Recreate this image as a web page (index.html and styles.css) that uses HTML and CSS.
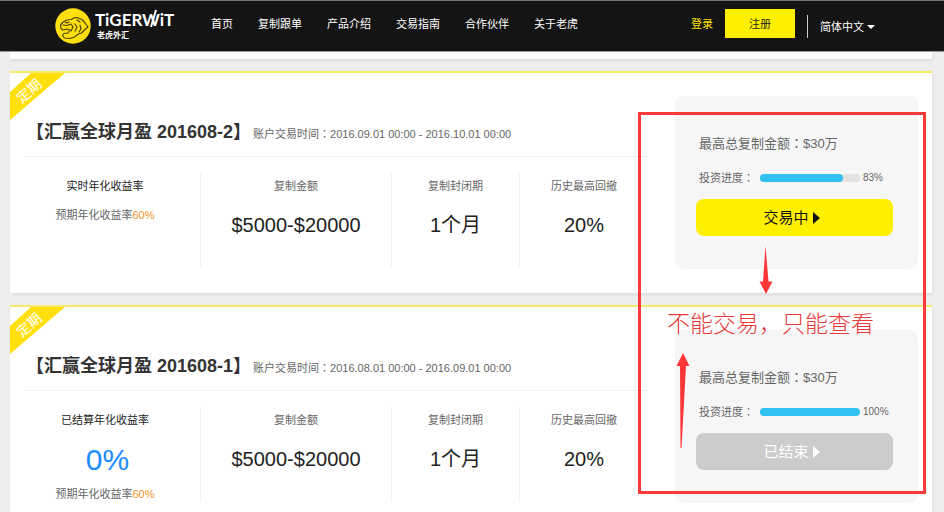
FILE: index.html
```html
<!DOCTYPE html>
<html lang="zh-CN">
<head>
<meta charset="utf-8">
<title>老虎外汇</title>
<link rel="stylesheet" href="styles.css">
</head>
<body>
<header class="topbar">
  <a class="logo" href="#">
    <svg class="logo-mark" viewBox="0 0 36 36" aria-hidden="true">
      <circle cx="18" cy="18" r="17.700" fill="#ffdf0f"/>
      <g fill="none" stroke="#4a430f" stroke-width="1.200" stroke-linecap="round" stroke-linejoin="round">
        <path d="M33 19l-3-4-3-3.500-5-2-3 .5-3 1.500-4 .5-4 2-2.500 3 .5 3.500 2 1.500 4-1 3 1-2 3-4 .5-1.500 2 2 2.500 5 .5 5-1.500 4-3 3-1 3-3z"/>
        <path d="M8 17l4 .5 4-1.500 2 3-2 4M20 16l2 3-2 4M25 17l1 4-2 3M22 12l3 2M10 14l2 1 2-1"/>
      </g>
    </svg>
    <span class="logo-text">
      <span class="logo-name">TiGERWiT
        <svg class="logo-slash" viewBox="0 0 8 20" aria-hidden="true"><path d="M1 18L6 1" stroke="#fff" stroke-width="2"/></svg>
      </span>
      <span class="logo-sub">老虎外汇</span>
    </span>
  </a>
  <nav class="nav">
    <a href="#">首页</a>
    <a href="#">复制跟单</a>
    <a href="#">产品介绍</a>
    <a href="#">交易指南</a>
    <a href="#">合作伙伴</a>
    <a href="#">关于老虎</a>
  </nav>
  <div class="account">
    <a class="login" href="#">登录</a>
    <button class="register" type="button">注册</button>
    <button class="language" type="button">简体中文<span class="caret"></span></button>
  </div>
</header>

<main class="page">
  <section class="card card-previous"></section>

  <section class="card">
    <div class="ribbon"><span>定期</span></div>
    <div class="details">
      <div class="heading">
        <h2>【汇赢全球月盈 201608-2】</h2>
        <p>账户交易时间<span class="colon" lang="zh-TW">：</span>2016.09.01 00:00 - 2016.10.01 00:00</p>
      </div>
      <div class="stats">
        <div class="stat stat-rate">
          <h3>实时年化收益率</h3>
          <p class="expected">预期年化收益率<em>60%</em></p>
        </div>
        <div class="stat"><h3>复制金额</h3><p class="value">$5000-$20000</p></div>
        <div class="stat"><h3>复制封闭期</h3><p class="value">1个月</p></div>
        <div class="stat"><h3>历史最高回撤</h3><p class="value">20%</p></div>
      </div>
    </div>
    <aside class="panel">
      <p class="limit">最高总复制金额<span class="colon" lang="zh-TW">：</span>$30万</p>
      <div class="progress">
        <span>投资进度<span class="colon" lang="zh-TW">：</span></span>
        <div class="track"><div class="fill" style="width: 83%"></div></div>
        <span class="percent">83%</span>
      </div>
      <button class="action" type="button">交易中<span class="play"></span></button>
    </aside>
  </section>

  <section class="card">
    <div class="ribbon"><span>定期</span></div>
    <div class="details">
      <div class="heading">
        <h2>【汇赢全球月盈 201608-1】</h2>
        <p>账户交易时间<span class="colon" lang="zh-TW">：</span>2016.08.01 00:00 - 2016.09.01 00:00</p>
      </div>
      <div class="stats">
        <div class="stat stat-rate">
          <h3>已结算年化收益率</h3>
          <p class="rate">0%</p>
          <p class="expected">预期年化收益率<em>60%</em></p>
        </div>
        <div class="stat"><h3>复制金额</h3><p class="value">$5000-$20000</p></div>
        <div class="stat"><h3>复制封闭期</h3><p class="value">1个月</p></div>
        <div class="stat"><h3>历史最高回撤</h3><p class="value">20%</p></div>
      </div>
    </div>
    <aside class="panel">
      <p class="limit">最高总复制金额<span class="colon" lang="zh-TW">：</span>$30万</p>
      <div class="progress">
        <span>投资进度<span class="colon" lang="zh-TW">：</span></span>
        <div class="track"><div class="fill" style="width: 100%"></div></div>
        <span class="percent">100%</span>
      </div>
      <button class="action action-ended" type="button">已结束<span class="play"></span></button>
    </aside>
  </section>

  <div class="callout">
    <svg class="arrow arrow-down" viewBox="0 0 14 48" aria-hidden="true"><path d="M6.5 0L9.5 35.5H13.5L7 48L.5 35.5H4z"/></svg>
    <p>不能交易，只能查看</p>
    <svg class="arrow arrow-up" viewBox="0 0 14 96" aria-hidden="true"><path d="M7 0L13.500 13H10L5.500 95L4.500 95L4 13H.5z"/></svg>
  </div>
</main>
</body>
</html>
```

FILE: styles.css
```css
* {
  box-sizing: border-box;
}

body,
h2,
h3,
p {
  margin: 0;
}

body {
  background: #efeeef;
  color: #666;
  font: 11px/16px "Liberation Sans", "Noto Sans CJK SC", sans-serif;
}

a {
  color: inherit;
  text-decoration: none;
}

button {
  border: 0;
  padding: 0;
  font: inherit;
}

/* Top bar */
.topbar {
  display: flex;
  align-items: flex-start;
  height: 52px;
  padding-left: 55px;
  padding-right: 69px;
  border-top: 1px solid #777;
  border-bottom: 1px solid #999;
  background: #141414;
  color: #fff;
}

.logo {
  display: flex;
  gap: 4px;
  width: 156px;
  padding-top: 7px;
}

.logo-mark {
  width: 36px;
  height: 36px;
}

.logo-text {
  display: flex;
  flex-direction: column;
}

.logo-name {
  position: relative;
  font: 700 17px/24px Lato, sans-serif;
}

.logo-slash {
  position: absolute;
  left: 55px;
  top: 1px;
  width: 8px;
  height: 20px;
}

.logo-sub {
  padding-left: 2px;
  font-size: 8px;
  font-weight: 700;
  line-height: 8px;
}

.nav {
  display: flex;
  gap: 25px;
  padding-top: 15px;
}

.account {
  display: flex;
  margin-left: auto;
  padding-top: 8px;
}

.login {
  padding: 7px 12px 0 0;
  color: #ffe500;
}

.register {
  width: 70px;
  height: 29px;
  background: #fff000;
  color: #222;
}

.language {
  display: flex;
  align-items: center;
  gap: 3px;
  height: 23px;
  margin: 6px 0 0 12px;
  padding-left: 12px;
  border-left: 1px solid #ccc;
  background: none;
  color: #fff;
}

.caret {
  border: 4px solid transparent;
  border-top-color: #fff;
  border-bottom: 0;
}

/* Product cards */
.page {
  position: relative;
  display: flex;
  flex-direction: column;
  gap: 12px;
  padding: 0 12px 12px 10px;
}

.card {
  position: relative;
  display: grid;
  grid-template-columns: minmax(0, 1fr) 243px;
  gap: 27px;
  padding: 23px 14px 24px 16px;
  border-top: 2px solid #f7e96b;
  background: #fff;
  box-shadow: 1px 2px 3px #ddd;
}

.card-previous {
  display: block;
  height: 7px;
  padding: 0;
  border: 0;
}

.ribbon {
  position: absolute;
  top: 0;
  left: 0;
  display: grid;
  place-items: center;
  width: 55px;
  height: 47px;
  padding: 0 17px 11px 0;
  background: #ffdf0c;
  clip-path: polygon(21px 0, 100% 0, 0 100%, 0 19px);
  color: #fff;
  font-size: 14px;
}

.ribbon span {
  white-space: nowrap;
  transform: rotate(-41deg);
}

.colon {
  font-family: "Noto Sans CJK TC", sans-serif;
  line-height: 1;
}

.heading {
  display: flex;
  align-items: center;
  gap: 2px;
  height: 61px;
  padding-top: 12px;
  border-bottom: 1px solid #f0f0f0;
  white-space: nowrap;
}

.heading h2 {
  color: #333;
  font-size: 18px;
  line-height: 26px;
}

.heading p {
  padding-top: 3px;
}

.stats {
  display: grid;
  grid-template-columns: 175fr 191fr 128fr 128fr;
  height: 94px;
  margin-top: 16px;
}

.stat {
  padding-top: 5px;
  border-right: 1px solid #f0f0f0;
  text-align: center;
}

.stat:last-child {
  border-right: 0;
}

.stat-rate {
  padding-right: 16px;
}

.stat h3 {
  font-size: 11px;
  font-weight: 400;
  line-height: 16px;
}

.stat-rate h3 {
  color: #222;
}

.value {
  margin-top: 16px;
  color: #222;
  font-size: 20px;
  line-height: 30px;
}

.rate {
  margin-top: 16px;
  padding-left: 5px;
  color: #1a8cff;
  font-size: 30px;
  line-height: 32px;
}

.expected {
  margin-top: 13px;
}

.rate + .expected {
  margin-top: 10px;
}

.expected em {
  color: #f7931e;
  font-style: normal;
}

/* Copy panel */
.panel {
  height: 173px;
  padding: 38px 25px 0 21px;
  border-radius: 8px;
  background: #f6f6f6;
}

.limit {
  padding-left: 3px;
  font-size: 13px;
  line-height: 20px;
}

.progress {
  display: flex;
  align-items: center;
  height: 16px;
  margin: 16px 0 13px;
  padding-left: 3px;
}

.track {
  width: 100px;
  height: 8px;
  margin: 0 3px 0 6px;
  border-radius: 4px;
  background: #e3e3e3;
}

.fill {
  height: 100%;
  border-radius: 4px;
  background: #31c1f1;
}

.percent {
  font-size: 10px;
}

.action {
  display: flex;
  align-items: center;
  justify-content: center;
  gap: 4px;
  width: 100%;
  height: 37px;
  padding-right: 6px;
  border-radius: 8px;
  background: #fff000;
  color: #111;
  font-size: 15px;
}

.action-ended {
  background: #ccc;
  color: #fff;
}

.play {
  border: 6px solid transparent;
  border-left: 7px solid currentColor;
  border-right: 0;
}

/* Note drawn over the copy panels */
.callout {
  position: absolute;
  top: 60px;
  right: 18px;
  width: 288px;
  height: 382px;
  border: 3px solid #f83a3a;
  color: #e83a3a;
}

.callout p {
  position: absolute;
  top: 193px;
  left: 26px;
  font-size: 23px;
  font-weight: 300;
  line-height: 32px;
  white-space: nowrap;
}

.arrow {
  position: absolute;
  width: 14px;
  fill: #ff3636;
}

.arrow-down {
  top: 131px;
  left: 118px;
  height: 48px;
}

.arrow-up {
  top: 238px;
  left: 35px;
  height: 96px;
}
```
